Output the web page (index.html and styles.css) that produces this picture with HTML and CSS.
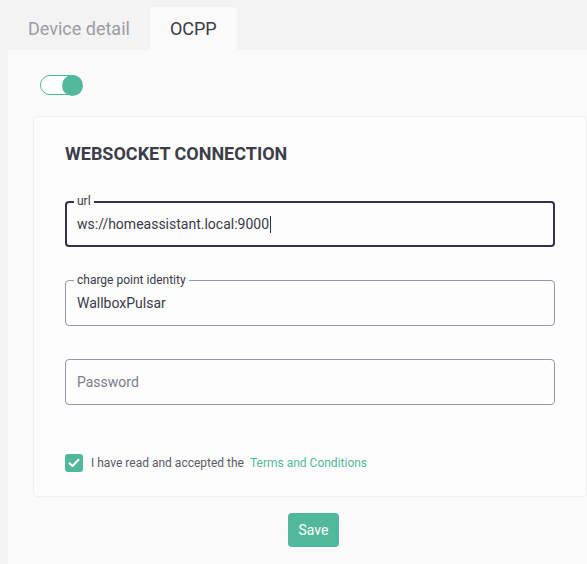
FILE: index.html
```html
<!DOCTYPE html>
<html>
<head>
<meta charset="utf-8">
<link rel="stylesheet" href="styles.css">
</head>
<body>
<div class="tabs">
  <div class="tab">Device detail</div>
  <div class="tab active">OCPP</div>
</div>
<div class="panel">
  <div class="toggle"><span class="knob"></span></div>
  <div class="card">
    <h2 class="heading">WEBSOCKET CONNECTION</h2>
    <div class="field focused">
      <span class="label">url</span>
      <div class="value">ws://homeassistant.local:9000<span class="caret"></span></div>
    </div>
    <div class="field">
      <span class="label">charge point identity</span>
      <div class="value">WallboxPulsar</div>
    </div>
    <div class="field">
      <div class="value placeholder">Password</div>
    </div>
    <div class="terms">
      <span class="check">
        <svg width="12" height="10" viewBox="0 0 12 10"><path d="M1.5 5.2 L4.5 8 L10.5 1.8" fill="none" stroke="#fff" stroke-width="2" stroke-linecap="round" stroke-linejoin="round"/></svg>
      </span>
      <span class="terms-text">I have read and accepted the</span>
      <a class="link">Terms and Conditions</a>
    </div>
  </div>
  <div class="actions">
    <button class="save">Save</button>
  </div>
</div>
</body>
</html>
```

FILE: styles.css
```css
html, body {
  margin: 0;
  padding: 0;
  overflow: hidden;
  background: #f3f3f3;
  font-family: Roboto, "Liberation Sans", sans-serif;
}
body {
  padding-left: 8px;
  width: 604px;
  height: 564px;
}
.tabs {
  display: flex;
  margin-top: 7px;
  height: 43px;
}
.tab {
  padding: 0 20px;
  height: 43px;
  line-height: 43px;
  font-size: 18px;
  color: #9b9ba6;
  border-radius: 4px 4px 0 0;
}
.tab.active {
  background: #fafafa;
  color: #3b3b46;
}
.panel {
  background: #fafafa;
  padding: 25px 25px 30px 25px;
  min-height: 480px;
}
.toggle {
  width: 40px;
  height: 18px;
  margin-left: 7px;
  border: 1.5px solid #52b89c;
  border-radius: 11px;
  background: #fff;
  display: flex;
  justify-content: flex-end;
  align-items: center;
}
.knob {
  width: 21px;
  height: 21px;
  border-radius: 50%;
  background: #52b89c;
  margin-right: -1.5px;
}
.card {
  margin-top: 21px;
  background: #fdfdfd;
  border: 1px solid #f0f0f0;
  border-radius: 4px;
  padding: 26px 31px 24px 31px;
}
.heading {
  margin: 0;
  font-size: 18px;
  line-height: 22px;
  font-weight: 700;
  color: #3d3d4a;
}
.field {
  position: relative;
  height: 44px;
  border: 1px solid #9a98a9;
  border-radius: 4px;
  margin-top: 33px;
}
.card .heading + .field {
  margin-top: 36px;
}
.field.focused {
  border: 2px solid #34334a;
  height: 42px;
}
.label {
  position: absolute;
  top: -8px;
  left: 8px;
  padding: 0 3px;
  background: #fcfcfc;
  font-size: 12px;
  line-height: 14px;
  color: #3a3a48;
}
.field.focused .label {
  left: 7px;
  top: -9px;
}
.value {
  padding-left: 11px;
  height: 100%;
  display: flex;
  align-items: center;
  font-size: 14px;
  color: #3a3a48;
}
.field.focused .value {
  padding-left: 10px;
}
.placeholder {
  color: #7d7c8a;
}
.caret {
  display: inline-block;
  width: 1px;
  height: 17px;
  background: #33324a;
  margin-left: 1px;
}
.terms {
  display: flex;
  align-items: center;
  margin-top: 49px;
  font-size: 12px;
}
.check {
  width: 18px;
  height: 18px;
  border-radius: 3px;
  background: #52b89c;
  display: flex;
  align-items: center;
  justify-content: center;
  margin-right: 8px;
}
.terms-text {
  color: #5b5a68;
}
.link {
  color: #52b89c;
  margin-left: 6px;
}
.actions {
  display: flex;
  justify-content: center;
  margin-top: 16px;
  padding-left: 7px;
}
.save {
  width: 51px;
  height: 34px;
  border: none;
  border-radius: 4px;
  background: #52b89c;
  color: #fff;
  font-family: Roboto, "Liberation Sans", sans-serif;
  font-size: 14px;
  padding: 0;
}
```
